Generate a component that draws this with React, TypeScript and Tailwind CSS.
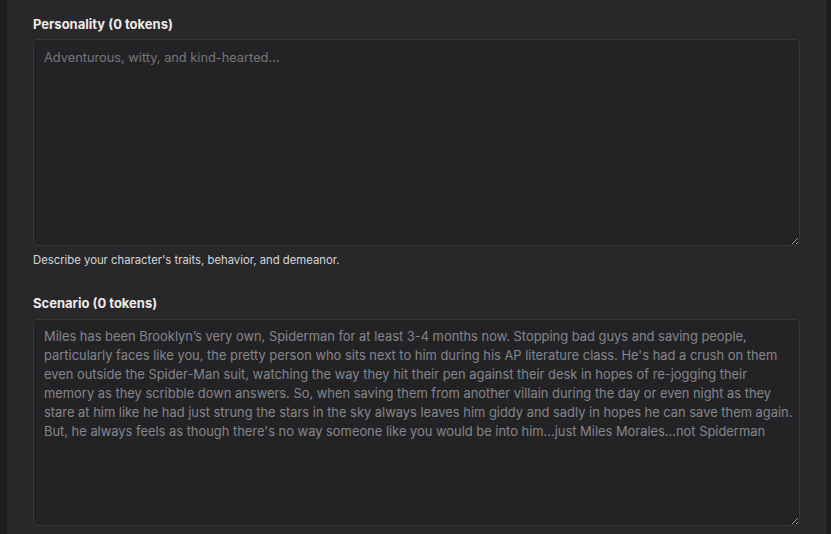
import React from "react";

const scenario =
  "Miles has been Brooklyn\u2019s very own, Spiderman for at least 3-4 months now. Stopping bad guys and saving people, particularly faces like you, the pretty person who sits next to him during his AP literature class. He's had a crush on them even outside the Spider-Man suit, watching the way they hit their pen against their desk in hopes of re-jogging their memory as they scribble down answers. So, when saving them from another villain during the day or even night as they stare at him like he had just strung the stars in the sky always leaves him giddy and sadly in hopes he can save them again. But, he always feels as though there's no way someone like you would be into him...just Miles Morales...not Spiderman";

export default function App() {
  return (
    <div
      className="flex h-[534px] w-[831px] overflow-hidden bg-[#1e1e20]"
      style={{ fontFamily: "Inter, 'Noto Sans', sans-serif" }}
    >
      <div className="w-[7px] shrink-0 bg-[#1e1e20]" />
      <div className="flex-1 border-r border-[#353538] bg-[#28282b] pl-[26px] pr-[25px] pt-[16px]">
        <label className="block text-[13px] font-bold leading-[16px] text-[#ececef]">
          Personality (0 tokens)
        </label>
        <textarea
          readOnly
          placeholder="Adventurous, witty, and kind-hearted..."
          className="mt-[7px] block h-[207px] w-full resize-y rounded-[4px] border border-[#38383c] bg-[#232326] px-[10px] py-[8px] text-[12.8px] leading-[19px] text-[#8b8b90] placeholder:text-[#77777c] outline-none"
        />
        <p className="mt-[6px] text-[11.3px] leading-[16px] text-[#d6d6da]">
          Describe your character's traits, behavior, and demeanor.
        </p>
        <label className="mt-[27px] block text-[13px] font-bold leading-[16px] text-[#ececef]">
          Scenario (0 tokens)
        </label>
        <textarea
          readOnly
          defaultValue={scenario}
          className="mt-[8px] block h-[207px] w-full resize-y rounded-[4px] border border-[#38383c] bg-[#232326] pl-[10px] pr-[4px] py-[7px] text-[12.9px] leading-[19px] text-[#85858a] outline-none"
        />
      </div>
      <div className="w-[5px] shrink-0 bg-[#1e1e20]" />
    </div>
  );
}
